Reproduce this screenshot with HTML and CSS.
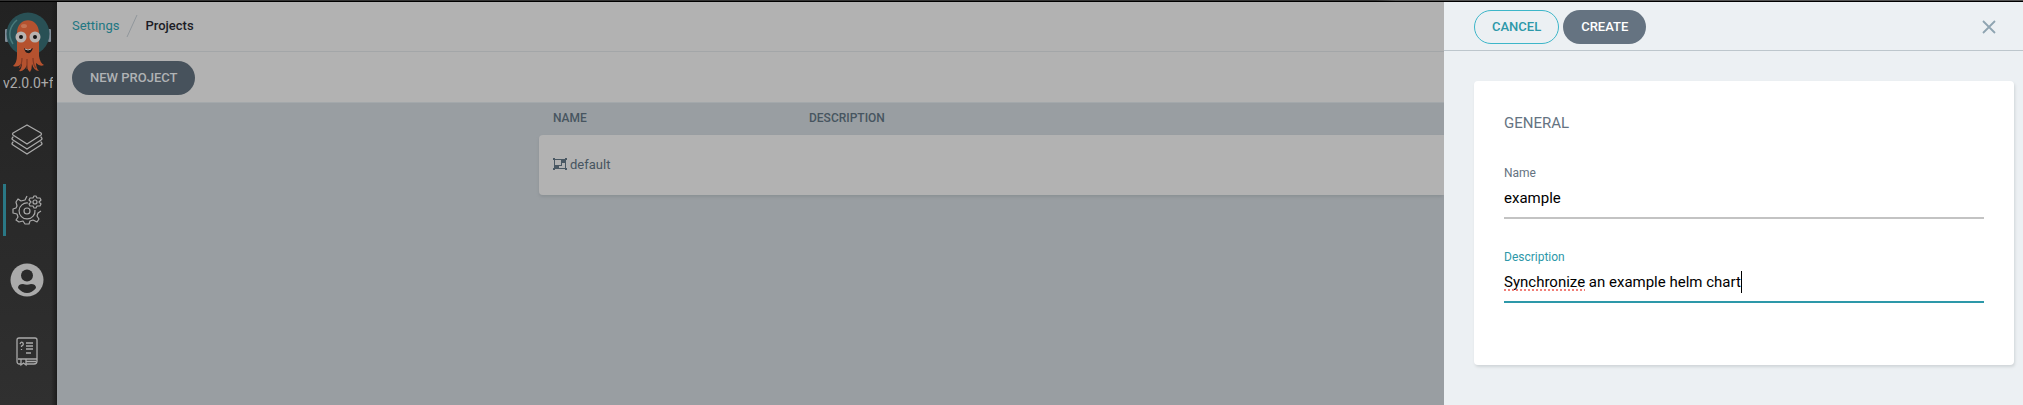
FILE: index.html
```html
<!DOCTYPE html>
<html lang="en">
<head>
<meta charset="utf-8">
<title>Projects</title>
<link rel="stylesheet" href="styles.css">
</head>
<body>
<div class="app">
  <nav class="sidebar" aria-label="Main">
    <div class="brand">
      <svg class="logo" viewBox="0 0 46 62" aria-hidden="true">
        <rect x="0" y="18" width="3" height="13" rx="1" fill="#7f8b97"/>
        <rect x="43" y="18" width="3" height="13" rx="1" fill="#7f8b97"/>
        <circle cx="23" cy="23" r="21.500" fill="#295055"/>
        <path d="M8 33C2 24 5 15 12 9" fill="none" stroke="#4a7a7b" stroke-width="1.500"/>
        <path d="M12 22C12 5 34 5 34 22L34 45Q35 52 39 54Q35 56 31 52Q31 57 34 60Q29 60 27 53Q27 58 25 61Q22 59 22 54Q19 61 14 60Q17 57 17 52Q13 57 8 55Q12 52 12 44Z" fill="#b5522f"/>
        <path d="M17 47Q17 54 14 57M22 48V58M28 47Q28 54 31 57" fill="none" stroke="#843a24" stroke-width="1.200"/>
        <ellipse cx="19" cy="15" rx="3" ry="2" fill="#c47352"/>
        <circle cx="16" cy="26" r="5.500" fill="#b8b3b0"/><circle cx="30" cy="26" r="5.500" fill="#b8b3b0"/>
        <circle cx="16" cy="26" r="2" fill="#151515"/><circle cx="30" cy="26" r="2" fill="#151515"/>
        <path d="M19 37Q23 40 28 37Q26 43 23 42Q20 42 19 37Z" fill="#221b1b"/><path d="M20 38Q23 40 26 38" fill="none" stroke="#b8b3b0"/>
      </svg>
      <span class="version">v2.0.0+f</span>
    </div>
    <a class="nav-item" href="#applications" aria-label="Applications">
      <svg width="32" height="32" viewBox="0 0 32 32" aria-hidden="true"><g fill="none" stroke="#aaa" stroke-width="1.300" stroke-linejoin="round" stroke-linecap="round"><path d="M16 1L30 9Q31 10 30 11L16 20L2 11Q1 10 2 9Z"/><path d="M2 13Q0 15 2 16L16 25L30 16Q32 15 30 13"/><path d="M2 18Q0 20 2 21L16 30L30 21Q32 20 30 18"/></g></svg>
    </a>
    <a class="nav-item nav-item--active" href="#settings" aria-label="Settings">
      <svg width="30" height="30" viewBox="0 0 30 30" aria-hidden="true"><g fill="none" stroke="#aaa" stroke-width="1.200" stroke-linejoin="round"><path d="M15 1L13 5L9 6L6 4L4 7L5 11L4 13L1 14V18L5 19L6 22L4 25L7 27L11 26L13 29H17L18 26L21 25L25 27L27 24L25 21L26 18L29 16"/><circle cx="15" cy="16" r="3"/><path d="M16 8A8 8 0 1 0 23 15"/><path d="M22 1H24L25 3L28 3L29 5L27 7L29 9L28 11L25 11L24 13H22L21 11L18 11L17 9L19 7L17 5L18 3L21 3Z"/><circle cx="23" cy="7" r="2"/></g></svg>
    </a>
    <a class="nav-item" href="#user" aria-label="User info">
      <svg width="34" height="34" viewBox="0 0 34 34" aria-hidden="true"><circle cx="17" cy="17" r="16.500" fill="#aaa"/><circle cx="17" cy="12.500" r="6" fill="#2a2a2a"/><path d="M8 25Q8 21 13 21Q17 22.500 21 21Q26 21 26 25Q22 30 17 30Q12 30 8 25Z" fill="#2a2a2a"/></svg>
    </a>
    <a class="nav-item nav-item--docs" href="#docs" aria-label="Documentation">
      <svg width="22" height="30" viewBox="0 0 22 30" aria-hidden="true"><g fill="none" stroke="#aaa" stroke-width="1.300"><path d="M5 27H3Q1 27 1 24V3Q1 1 3 1H19Q21 1 21 3V24Q21 27 18 27H10"/><path d="M2 22H21M10 24.500H20M5 22V28L7.500 26L10 28V22"/><path d="M10 6H17M10 9H17M10 12H17M10 16H15"/><path d="M4 7Q5 4 7 6Q8 8 5.500 9V10M5.500 12V13"/></g></svg>
    </a>
  </nav>

  <main class="page">
    <header class="topbar">
      <a class="crumb-link" href="#settings">Settings</a>
      <svg class="crumb-sep" width="12" height="24" viewBox="0 0 12 24" aria-hidden="true"><path d="M1 23L11 1" stroke="#91979c" fill="none"/></svg>
      <span class="crumb-current">Projects</span>
    </header>
    <div class="toolbar"><button class="btn btn--dim" type="button">NEW PROJECT</button></div>
    <section class="content">
      <table class="projects">
        <thead><tr><th class="col-name">NAME</th><th>DESCRIPTION</th></tr></thead>
        <tbody><tr><td><span class="project"><svg width="14" height="12" viewBox="0 0 14 12" aria-hidden="true"><path d="M0 0H2V1H12V0H14V2H13V10H14V12H12V11H2V12H0V10H1V2H0Z" fill="#4a5863"/><path d="M2 2H8V7H2ZM9 5H12V10H6V8H9Z" fill="#b2b2b2"/></svg>default</span></td><td></td></tr></tbody>
      </table>
    </section>
  </main>

  <aside class="panel" aria-label="New project">
    <header class="panel-head">
      <button class="btn btn--outline" type="button">CANCEL</button>
      <button class="btn btn--solid" type="submit" form="project-form">CREATE</button>
      <button class="close" type="button" aria-label="Close"><svg width="14" height="14" viewBox="0 0 14 14" aria-hidden="true"><path d="M1 1L13 13M13 1L1 13" stroke="#8fa4b1" stroke-width="1.800" fill="none"/></svg></button>
    </header>
    <form class="card" id="project-form">
      <h2 class="card-title">GENERAL</h2>
      <div class="field">
        <label for="name">Name</label>
        <input id="name" type="text" value="example" autocomplete="off">
      </div>
      <div class="field field--focus">
        <label for="description">Description</label>
        <input id="description" type="text" value="Synchronize an example helm chart" autocomplete="off">
        <span class="misspelling"></span>
        <span class="caret"></span>
      </div>
    </form>
  </aside>
</div>
</body>
</html>
```

FILE: styles.css
```css
* { box-sizing: border-box; }
body { margin: 0; font-family: Roboto, "Liberation Sans", sans-serif; font-size: 13px; background: #999ea2; }
button, input { font: inherit; }
a { text-decoration: none; }

.app { display: flex; min-height: 100vh; border-top: 2px solid #000; position: relative; }
.app::before { content: ""; position: absolute; top: -2px; left: 0; right: 0; height: 1px; background: linear-gradient(90deg, #333 68%, #555 69%); }

.sidebar { flex: 0 0 57px; min-width: 0; display: flex; flex-direction: column; align-items: center; background: linear-gradient(90deg, transparent 51px, #1c1c1c), linear-gradient(#222, #303030); }
.brand { width: 100%; height: 112px; padding: 9px 4px 0 3px; display: flex; flex-direction: column; align-items: center; overflow: hidden; }
.logo { width: 46px; height: 62px; flex: none; }
.version { width: 100%; overflow: hidden; font-size: 14px; line-height: 20px; color: #aaa; white-space: nowrap; }
.nav-item { width: 100%; height: 52px; margin-bottom: 18px; display: flex; align-items: center; justify-content: center; padding-right: 3px; }
.nav-item--active { background: linear-gradient(#2a7885, #2a7885) 3px 0 / 3px 100% no-repeat; }
.nav-item--docs { height: 56px; margin-bottom: 0; }

.page { flex: 1; min-width: 0; }
.topbar { height: 50px; padding: 0 15px 2px; display: flex; align-items: center; background: #b2b2b2; border-bottom: 1px solid #a3a6a8; }
.crumb-link { color: #217782; }
.crumb-sep { margin: 0 7px; }
.crumb-current { font-weight: 500; color: #1c1c26; }
.toolbar { height: 51px; padding: 2px 15px 0; display: flex; align-items: center; background: #b2b2b2; border-bottom: 1px solid #a3a8ab; }

.btn { height: 34px; padding: 0 17px; border: 1px solid transparent; border-radius: 17px; font-weight: 500; line-height: 16px; white-space: nowrap; }
.btn--dim { background: #47525c; color: #b0b3b5; }
.btn--outline { background: transparent; border-color: #3db6c9; color: #2d98a9; }
.btn--solid { background: #657381; color: #fff; }

.content { padding-left: 482px; }
.projects { width: 100%; border-collapse: collapse; text-align: left; color: #475560; }
.projects th { height: 32px; padding: 0 0 2px; font-size: 12px; font-weight: 500; }
.projects .col-name { width: 270px; padding-left: 14px; }
.projects td { height: 60px; padding: 0 0 2px; background: #b2b2b2; }
.projects td:first-child { padding-left: 14px; border-radius: 4px 0 0 4px; }
.projects tbody tr { box-shadow: 0 2px 3px #8b9195; border-radius: 4px; }
.project { display: flex; align-items: center; gap: 3px; }

.panel { flex: 0 0 579px; background: #ecf0f3; }
.panel-head { height: 49px; padding: 2px 26px 0 30px; display: flex; align-items: center; gap: 4px; border-bottom: 1px solid #bdc6cc; }
.close { margin-left: auto; padding: 1px; border: 0; background: none; display: flex; }
.card { margin: 30px 9px 0 30px; padding: 30px 30px 62px; border-radius: 4px; background: #fff; box-shadow: 1px 2px 3px #d0d5d8; }
.card-title { margin: 0 0 30px; font-size: 15px; font-weight: 400; line-height: 24px; color: #657381; }
.field { position: relative; }
.field + .field { margin-top: 30px; }
.field label { display: block; margin-bottom: 2px; font-size: 12px; line-height: 16px; color: #657381; }
.field input { display: block; width: 100%; height: 36px; padding: 0 0 4px; border: 0; border-bottom: 2px solid #c3c3c3; border-radius: 0; outline: 0; background: none; color: #000; font-size: 15px; line-height: 24px; }
.field--focus label { color: #2d98a9; }
.field--focus input { border-color: #2d98a9; }
.misspelling { position: absolute; left: 0; top: 40px; width: 81px; height: 2px; background: repeating-linear-gradient(90deg, #f07f78 0 2px, transparent 2px 4px); }
.caret { position: absolute; left: 237px; top: 22px; width: 1px; height: 22px; background: #000; }
```
